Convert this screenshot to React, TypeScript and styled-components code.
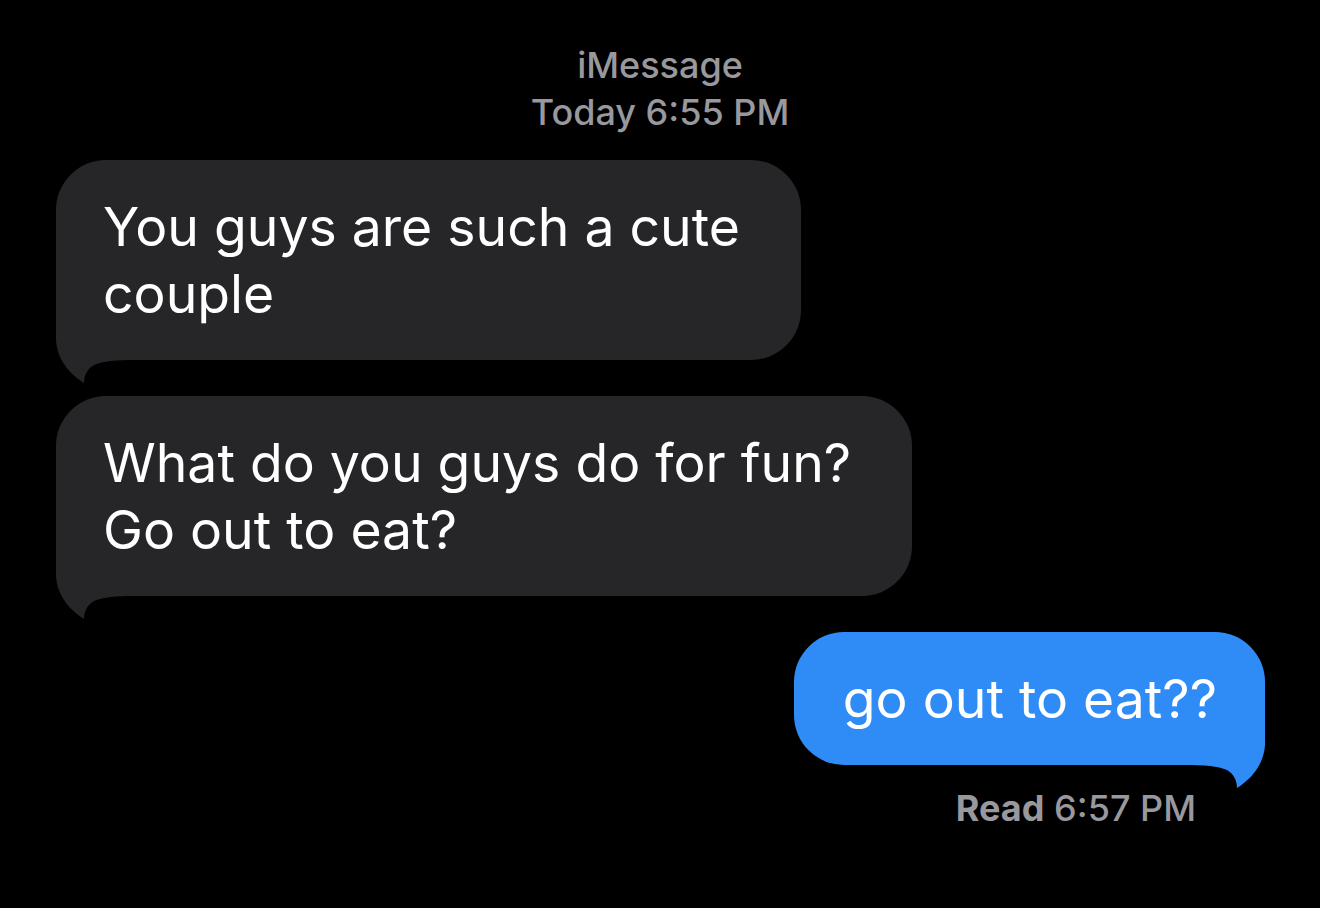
import React from "react";
import styled, { createGlobalStyle } from "styled-components";

type Side = "in" | "out";

interface Message {
  side: Side;
  lines: string[];
}

const messages: Message[] = [
  { side: "in", lines: ["You guys are such a cute", "couple"] },
  { side: "in", lines: ["What do you guys do for fun?", "Go out to eat?"] },
  { side: "out", lines: ["go out to eat??"] },
];

// bubble tail, drawn for the left side and mirrored for sent messages
const Tail = function ({ side }: { side: Side }) {
  return (
    <StyledTail $side={side} viewBox="0 0 80 74" width="80" height="74">
      <path d="M0 0 L0 30 C1 48 12 63 28 73 C28 66 31 59 38 55 C47 51 60 50 80 50 L80 0 Z" />
    </StyledTail>
  );
};

const App = function () {
  return (
    <>
      <GlobalStyle />
      <StyledScreen>
        <StyledHeader>
          <span>iMessage</span>
          <span>Today 6:55 PM</span>
        </StyledHeader>
        <StyledThread>
          {messages.map((m, i) => (
            <StyledRow key={i} $side={m.side}>
              <StyledBubble $side={m.side}>
                {m.lines.map((l, j) => (
                  <StyledLine key={j}>{l}</StyledLine>
                ))}
                <Tail side={m.side} />
              </StyledBubble>
            </StyledRow>
          ))}
        </StyledThread>
        <StyledReceipt>
          <b>Read</b> 6:57 PM
        </StyledReceipt>
      </StyledScreen>
    </>
  );
};

export default App;

const GlobalStyle = createGlobalStyle`
  body {
    margin: 0;
    background: #000;
  }
`;

const StyledScreen = styled.div`
  width: 1320px;
  height: 908px;
  background: #000;
  box-sizing: border-box;
  padding-top: 42px;
  display: flex;
  flex-direction: column;
  font-family: Inter, "Liberation Sans", sans-serif;
  overflow: hidden;
`;

const StyledHeader = styled.div`
  display: flex;
  flex-direction: column;
  align-items: center;
  color: #98989d;
  font-size: 36px;
  line-height: 47px;
  font-weight: 500;
`;

const StyledThread = styled.div`
  display: flex;
  flex-direction: column;
  gap: 36px;
  margin-top: 24px;
  padding: 0 55px 0 56px;
`;

const StyledRow = styled.div<{ $side: Side }>`
  display: flex;
  justify-content: ${(p) => (p.$side === "in" ? "flex-start" : "flex-end")};
`;

const StyledBubble = styled.div<{ $side: Side }>`
  position: relative;
  display: flex;
  flex-direction: column;
  box-sizing: border-box;
  padding: ${(p) => (p.$side === "in" ? "33px 61px 33px 47px" : "33px 48px 33px 49px")};
  border-radius: 50px;
  background: ${(p) => (p.$side === "in" ? "#262628" : "#2f8cf7")};
  color: #fff;
  font-size: 53.5px;
  line-height: 67px;
  white-space: nowrap;
`;

const StyledLine = styled.span`
  display: block;
  position: relative;
  z-index: 1;
`;

const StyledTail = styled.svg<{ $side: Side }>`
  position: absolute;
  bottom: -24px;
  ${(p) => (p.$side === "in" ? "left: 0;" : "right: 0; transform: scaleX(-1);")}
  fill: ${(p) => (p.$side === "in" ? "#262628" : "#2f8cf7")};
`;

const StyledReceipt = styled.div`
  align-self: flex-end;
  margin-top: 23px;
  padding-right: 124px;
  color: #98989d;
  font-size: 36px;
  line-height: 40px;
  font-weight: 500;

  b {
    font-weight: 700;
  }
`;
